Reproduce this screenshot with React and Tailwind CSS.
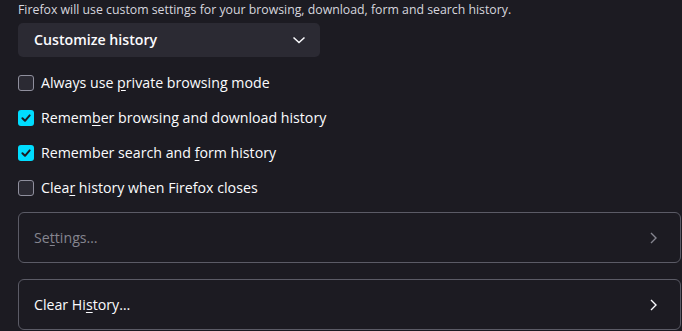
import React from "react";

function Check({ checked }) {
  return checked ? (
    <div className="w-4 h-4 rounded-[3px] bg-[#00ddff] flex items-center justify-center shrink-0">
      <svg width="12" height="12" viewBox="0 0 12 12" fill="none">
        <path d="M2.4 6.3 L5 8.8 L9.7 3.4" stroke="#1c1b22" strokeWidth="2" strokeLinecap="round" strokeLinejoin="round" />
      </svg>
    </div>
  ) : (
    <div className="w-4 h-4 rounded-[3px] border border-[#8f8f9d] bg-[#2b2a33] shrink-0" />
  );
}

function Row({ checked, children }) {
  return (
    <div className="h-[35px] flex items-center gap-[7px]">
      <Check checked={checked} />
      <span className="text-[14.2px] text-[#fbfbfe]">{children}</span>
    </div>
  );
}

function Chevron({ color }) {
  return (
    <svg width="10" height="14" viewBox="0 0 10 14" fill="none">
      <path d="M3 2 L8 7 L3 12" stroke={color} strokeWidth="1.4" />
    </svg>
  );
}

export default function App() {
  return (
    <div className="w-[682px] h-[331px] overflow-hidden bg-[#1c1b22] pl-[18px]" style={{ fontFamily: '"Open Sans", "Noto Sans", sans-serif' }}>
      <div className="h-[22px] flex items-center text-[12.3px] text-[#d6d6de] -mt-[1px]">
        Firefox will use custom settings for your browsing, download, form and search history.
      </div>
      <div className="mt-[2px] h-[34px] w-[302px] rounded-[5px] bg-[#2b2a33] flex items-center justify-between pl-4 pr-[14px]">
        <span className="text-[14.2px] font-semibold text-[#fbfbfe]">Customize history</span>
        <svg width="14" height="10" viewBox="0 0 14 10" fill="none">
          <path d="M1.5 2.5 L7 7.5 L12.5 2.5" stroke="#fbfbfe" strokeWidth="1.5" />
        </svg>
      </div>
      <div className="mt-[8px]">
        <Row checked={false}>Always use <u className="underline-offset-2">p</u>rivate browsing mode</Row>
        <Row checked={true}>Remem<u className="underline-offset-2">b</u>er browsing and download history</Row>
        <Row checked={true}>Remember search and <u className="underline-offset-2">f</u>orm history</Row>
        <Row checked={false}>Clea<u className="underline-offset-2">r</u> history when Firefox closes</Row>
      </div>
      <div className="mt-[7px] h-[51px] w-[663px] rounded-[6px] border border-[#5b5b66] flex items-center justify-between pl-[15px] pr-[22px]">
        <span className="text-[14.2px] text-[#85858f]">Se<u className="underline-offset-2">t</u>tings…</span>
        <Chevron color="#85858f" />
      </div>
      <div className="mt-[16px] h-[51px] w-[663px] rounded-[6px] border border-[#5b5b66] flex items-center justify-between pl-[15px] pr-[22px]">
        <span className="text-[14.2px] text-[#fbfbfe]">Clear Hi<u className="underline-offset-2">s</u>tory…</span>
        <Chevron color="#fbfbfe" />
      </div>
    </div>
  );
}
